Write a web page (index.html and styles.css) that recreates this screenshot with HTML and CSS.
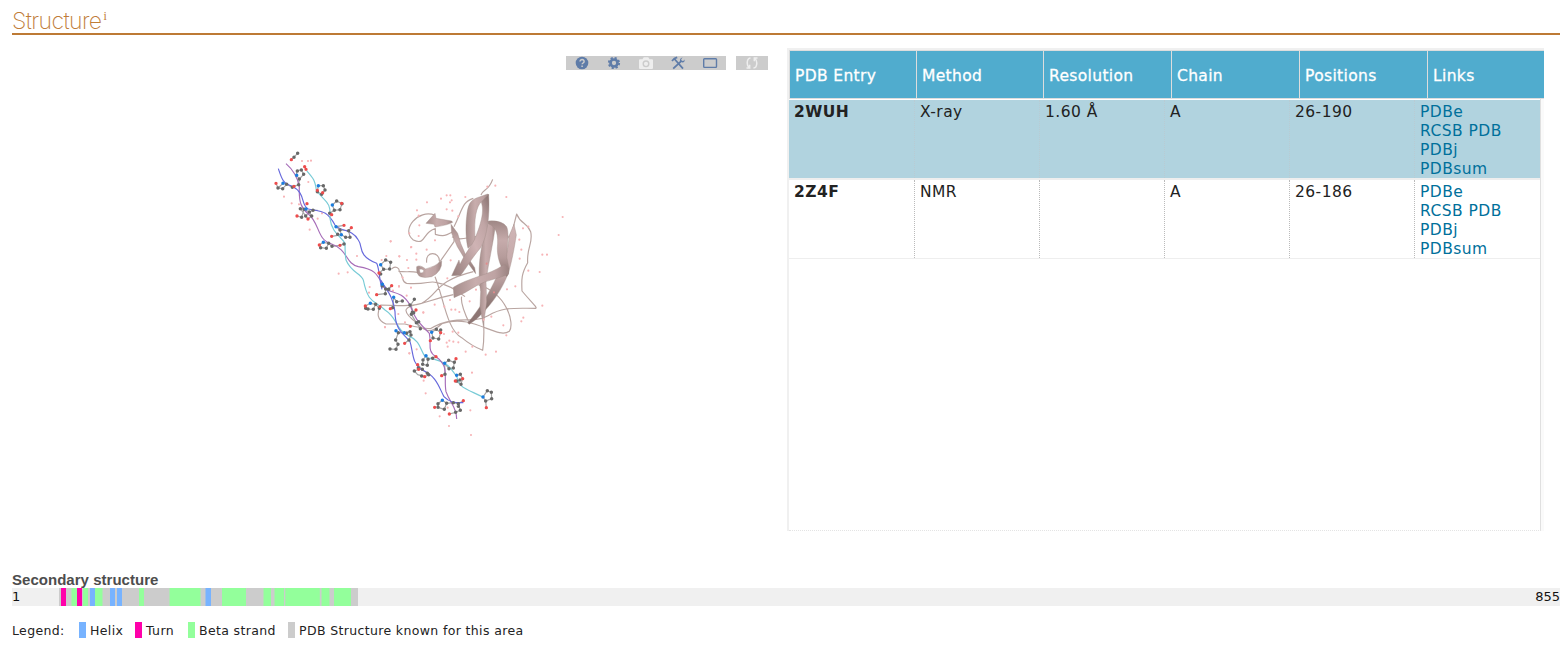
FILE: index.html
```html
<!DOCTYPE html>
<html lang="en">
<head>
<meta charset="utf-8">
<title>Structure</title>
<link rel="stylesheet" href="styles.css">
</head>
<body>
<main class="page">
<h2 class="title"><span>Structure</span><sup>i</sup></h2>
<div class="columns">
<section class="viewer">
<div class="toolbar">
<div class="tools">
<svg class="tool" viewBox="0 0 32 14"><circle cx="16" cy="7" r="6.3" fill="currentColor"/><path d="M14 5.5C14 2.9 18.3 3 18.1 5.6C18 7 16.1 7 16.1 8.3M16.1 9.6V11" fill="none" stroke="#ccc" stroke-width="1.5"/></svg>
<svg class="tool" viewBox="0 0 32 14"><circle cx="16" cy="7" r="3.5" fill="none" stroke="currentColor" stroke-width="2.7"/><circle cx="16" cy="7" r="5.2" fill="none" stroke="currentColor" stroke-width="1.8" stroke-dasharray="2.2 1.884"/></svg>
<svg class="tool off" viewBox="0 0 32 14"><path fill-rule="evenodd" fill="currentColor" d="M10 3.2H12.5L13.7 1.3H18.3L19.5 3.2H22Q23 3.2 23 4.2V12Q23 13 22 13H10Q9 13 9 12V4.2Q9 3.2 10 3.2ZM16 4.3A3.5 3.5 0 1 0 16 11.3A3.5 3.5 0 1 0 16 4.3M16 5.7A2.1 2.1 0 1 1 16 9.9A2.1 2.1 0 1 1 16 5.7"/></svg>
<svg class="tool" viewBox="0 0 32 14"><path d="M10 5L12.4 2.4L15.2 1.3M12.5 3L21 12.6M11.2 12.7L19.5 4.8" fill="none" stroke="currentColor" stroke-width="1.8"/><path d="M20.6 1.5L19.1 3.3L19.7 4.8L21.3 4.9L22.5 3.4Q23 6.3 20.5 6.5L18 5.5Q17.5 2 20.6 1.5" fill="currentColor"/></svg>
<svg class="tool" viewBox="0 0 32 14"><rect x="9.7" y="2.7" width="12.8" height="8.7" rx=".8" fill="none" stroke="currentColor" stroke-width="1.4"/></svg>
</div>
<div class="tools">
<svg class="tool off" viewBox="0 0 32 14"><path d="M14.5 1.9Q11.2 2.2 11.2 7Q11.2 9.7 13 11.5M17.5 12.1Q20.8 11.8 20.8 7Q20.8 4.3 19 2.5M13.7 8.8V12.1H10.5M18.3 5.2V1.9H21.5" fill="none" stroke="currentColor" stroke-width="1.5"/></svg>
</div>
</div>
<svg class="molecule" viewBox="265 145 310 300">
<defs>
<linearGradient id="ribbon" x1="0" y1="0" x2="1" y2="0"><stop offset="0" stop-color="#a58d8b"/><stop offset=".4" stop-color="#c8adad"/><stop offset=".75" stop-color="#bea3a3"/><stop offset="1" stop-color="#9c8482"/></linearGradient>
<linearGradient id="arrow" x1="0" y1="1" x2="1" y2="0"><stop offset="0" stop-color="#947c7a"/><stop offset=".5" stop-color="#cfb3b4"/><stop offset=".75" stop-color="#c0a5a5"/><stop offset="1" stop-color="#87706e"/></linearGradient>
<linearGradient id="strand" x1="0" y1="0" x2="0" y2="1"><stop offset="0" stop-color="#9f8785"/><stop offset=".35" stop-color="#c6abab"/><stop offset=".65" stop-color="#b69c9b"/><stop offset="1" stop-color="#8c7472"/></linearGradient>
<linearGradient id="tail" x1="0" y1="0" x2="0" y2="1"><stop offset="0" stop-color="#d0b5b6"/><stop offset=".5" stop-color="#c2a7a7"/><stop offset=".8" stop-color="#8e7775"/><stop offset="1" stop-color="#8c7472"/></linearGradient>
</defs>
<g transform="translate(380 170) scale(.33333)">
<path class="coil" d="M338 28C325 65 310 55 303 75M222 170C246 125 245 95 280 85M222 187V215L182 272L149 319M165 136C115 115 60 180 100 210C140 228 125 187 166 176V193C200 203 205 190 220 185M140 278C135 240 180 245 178 274M35 297C45 285 60 295 57 304C80 307 90 303 113 307M57 303C75 325 62 335 80 340C140 345 150 330 170 338C210 345 240 368 255 380M165 320C190 380 200 480 245 503Q275 528 308 541Q317 480 304 388M220 374C120 395 140 407 55 407L2 405C-10 430-10 450 18 462H75C115 475 118 473 151 476C230 430 275 465 324 437C370 410 400 415 467 415C474 413 454 397 426 363C424 325 425 310 443 278C440 230 460 220 452 185C440 155 423 165 410 132L399 175M296 345C380 370 405 460 388 484C350 510 280 430 188 460C175 468 150 505 112 460C60 420 70 410 125 400C180 370 160 335 280 305M245 380Q240 400 268 460M216 200C240 215 266 200 292 200"/>
</g>
<g class="ribbons" transform="translate(440 185) scale(.33333)">
<path fill="url(#strand)" d="M33 118L53 145L62 175L75 205L104 248L107 266L70 215L52 185L35 145Z"/>
<path fill="url(#tail)" d="M222 118L229 150C222 195 214 235 205 265C190 300 170 345 110 402L88 418L83 414C120 370 150 320 170 275C190 245 205 200 207 152L204 160Z"/>
<path fill="url(#ribbon)" d="M145 110L167 112C162 170 145 230 138 290L140 350L130 422L120 365L122 320C112 260 118 190 145 110Z"/>
<path fill="url(#ribbon)" d="M143 27L118 36C88 45 84 60 80 95C76 130 78 165 84 190L106 170C102 120 104 80 119 56L146 30Z"/>
<path fill="url(#arrow)" d="M146 28C150 90 142 155 122 188C95 220 85 240 62 271L35 272L57 225L60 238C75 205 90 190 103 165C122 120 134 80 124 52Q127 47 146 28Z"/>
<path fill="url(#strand)" d="M145 108Q185 105 200 125C208 145 202 180 200 215L207 250Q208 268 200 275C185 250 172 225 172 190C175 150 172 128 145 116Z"/>
<path fill="url(#ribbon)" d="M40 307C80 280 150 270 190 240Q195 236 200 242Q208 255 205 268C170 283 140 285 110 302Q75 325 42 338Z"/>
</g>
<g class="ribbons" transform="translate(405 205) scale(.33333)">
<path fill="url(#ribbon)" d="M63 55L90 25L93 40L140 48L143 52Q130 60 90 66L87 58Z"/>
<path fill="url(#ribbon)" fill-rule="evenodd" d="M35 185Q45 178 62 192Q90 185 110 168Q112 200 80 215Q35 225 35 195ZM43 193Q52 190 57 197Q54 207 45 203Z"/>
</g>
<g transform="translate(380 170) scale(.33333)">
<path class="water" d="M322 50h0M346 47h0M200 76h0M211 76h0M183 86h0M215 91h0M210 97h0M141 97h0M256 81h0M379 81h0M111 121h0M200 118h0M217 122h0M116 137h0M235 139h0M548 141h0M118 166h0M88 190h0M116 198h0M536 195h0M429 175h0M445 170h0M32 214h0M94 231h0M165 211h0M418 209h0M424 239h0M140 239h0M487 254h0M501 254h0M58 259h0M109 251h0M81 270h0M109 269h0M212 271h0M419 266h0M445 302h0M479 306h0M202 325h0M57 348h0M39 362h0M93 353h0M406 349h0M381 358h0M288 359h0M102 390h0M130 427h0M164 404h0M193 410h0M210 390h0M214 419h0M226 419h0M238 426h0M487 407h0M269 394h0M430 443h0M424 454h0M311 449h0M370 466h0M379 496h0M218 485h0M235 488h0M208 512h0M220 515h0M235 517h0M200 518h0M203 530h0M277 530h0M257 545h0M348 545h0M317 554h0M192 492h0M75 457h0M15 471h0M88 550h0M110 538h0M68 323h0M4 335h0M334 440h0"/>
<path class="water near" d="M320 281h0M342 367h0"/>
</g>
<g transform="translate(260 140) scale(.33333)">
<path class="water" d="M126 63h0M144 63h0M153 62h0M145 126h0M72 170h0M95 190h0M117 193h0M186 220h0M173 236h0M149 269h0M291 348h0M236 401h0M263 397h0M329 441h0M392 304h0M379 348h0M365 360h0M418 349h0M453 322h0M445 384h0M417 440h0"/>
<path class="bond" d="M94 59L113 40M134 80L138 88M110 106L110 92L124 90L131 103L118 117L110 106M118 117L116 134L102 139M48 130L54 144L68 146L80 133L69 130L54 144M80 133L97 142M111 228L125 232L132 208L148 216L159 211L173 211M137 228L148 216L155 228L144 237L121 206M175 137L190 137L195 150L185 163L172 155ZM217 195L230 183L246 191L240 209L223 211ZM223 211L209 220M228 260L252 256M240 270L266 272L274 263M228 260L240 270L244 284L257 292L270 292L266 272M244 284L233 286L215 289M240 316L252 312M190 307L178 315L182 323L199 325L206 310ZM206 310L216 319L240 316M362 374L377 360L392 367L389 387L371 388ZM371 388L357 399M368 435L382 448L395 438"/>
<path class="purple" d="M78 71C100 90 112 108 118 140C116 190 125 205 145 222C180 250 170 300 215 312C265 330 255 370 295 380C345 388 350 400 372 440"/>
<path class="blue" d="M55 86C65 115 68 130 95 138C140 160 120 195 145 207C185 215 200 210 225 255C240 275 275 265 295 300C310 320 290 345 350 370C358 385 358 420 366 448"/>
<path class="cyan" d="M140 92C160 115 165 120 169 150C190 185 215 180 210 235C215 280 245 290 255 310C255 330 255 345 258 360C275 400 302 398 310 420"/>
<path class="carbon" d="M113 40h0M102 52h0M112 93h0M124 90h0M131 103h0M118 117h0M116 134h0M54 144h0M68 146h0M80 133h0M97 142h0M132 208h0M121 206h0M148 216h0M155 228h0M159 211h0M125 232h0M137 228h0M190 137h0M195 150h0M172 155h0M185 163h0M230 183h0M246 191h0M240 209h0M223 211h0M209 220h0M240 270h0M266 272h0M270 292h0M257 292h0M233 283h0M252 312h0M206 310h0M216 319h0M199 325h0M182 323h0M377 360h0M392 367h0M389 387h0M371 388h0M362 402h0"/>
<path class="oxygen" d="M94 59h0M134 80h0M138 88h0M48 130h0M102 139h0M141 191h0M111 228h0M144 237h0M172 151h0M188 158h0M245 190h0M215 224h0M252 256h0M274 263h0M215 289h0M240 316h0M178 315h0M357 399h0"/>
<path class="nitrogen" d="M110 106h0M69 130h0M138 207h0M175 137h0M217 195h0M228 260h0M244 284h0M190 307h0M362 374h0"/>
</g>
<g transform="translate(350 280) scale(.33333)">
<path class="water" d="M57 38h0M105 142h0M145 102h0M178 220h0M221 302h0M227 340h0M269 409h0M297 438h0M361 391h0M363 465h0M366 278h0M293 383h0M170 47h0M220 98h0"/>
<path class="bond" d="M97 13L107 27L116 28L125 17M107 27L106 41L80 44M121 86L128 83L131 52L140 65L157 63M182 75L193 58M182 75L191 98L198 90M61 70L46 78L52 87L70 88L77 73ZM77 73L88 85M184 103L199 128L211 146M245 157L259 148L272 158L266 177L249 174ZM138 152L145 158L137 180L144 193L138 208L120 207M145 158L163 158L180 155L183 165L177 180L164 190M228 227L219 240L218 253L232 256L234 238ZM234 238L258 230M284 250L296 241L313 247L310 264L297 266ZM313 247L318 236M284 250L285 283L275 287M320 286L331 283L338 296L333 313L316 303M203 254L206 268L193 273L203 284L224 290L236 284L217 268ZM277 361L264 371L264 382L283 388L290 370ZM290 370L310 368L325 371L331 391L317 397L298 402M325 371L340 362M399 351L412 332L424 337L425 356L407 363ZM407 363L409 383"/>
<path class="cyan" d="M40 0C55 75 75 60 105 90C145 115 135 150 180 170C220 185 210 235 240 235C290 245 300 260 320 290C332 325 335 320 400 352"/>
<path class="purple" d="M100 20C120 45 150 25 180 75C195 120 210 130 238 160C245 190 230 215 258 230C300 260 280 290 288 335C300 370 320 380 320 417"/>
<path class="blue" d="M92 0C110 30 130 50 135 95C135 150 160 160 180 185C190 215 185 250 215 270C260 285 270 330 282 350C300 370 320 368 340 368"/>
<path class="carbon" d="M97 18h0M107 27h0M116 28h0M106 41h0M128 83h0M140 65h0M157 63h0M193 58h0M191 98h0M180 75h0M47 85h0M54 87h0M70 88h0M77 73h0M88 85h0M184 103h0M187 97h0M199 128h0M206 125h0M211 146h0M259 148h0M272 150h0M249 174h0M266 177h0M145 158h0M137 180h0M144 193h0M138 208h0M120 207h0M170 160h0M180 155h0M177 180h0M183 165h0M219 240h0M234 238h0M232 256h0M218 253h0M248 235h0M296 241h0M313 247h0M310 264h0M297 266h0M285 283h0M320 303h0M331 283h0M330 300h0M333 313h0M193 273h0M205 264h0M217 268h0M232 280h0M215 288h0M236 284h0M264 371h0M264 382h0M283 388h0M290 370h0M310 368h0M325 371h0M325 379h0M317 397h0M331 391h0M412 332h0M424 337h0M425 356h0M407 363h0"/>
<path class="oxygen" d="M125 17h0M80 44h0M121 86h0M198 90h0M46 78h0M90 80h0M181 139h0M241 182h0M272 158h0M164 190h0M258 230h0M318 236h0M275 287h0M338 296h0M316 303h0M203 254h0M206 268h0M224 290h0M254 382h0M340 362h0M298 402h0M409 383h0"/>
<path class="nitrogen" d="M97 13h0M131 52h0M61 70h0M138 152h0M163 158h0M245 157h0M228 227h0M284 250h0M320 286h0M277 361h0M399 351h0"/>
</g>
</svg>
</section>
<section class="entries">
<div class="head"><span>PDB Entry</span><span>Method</span><span>Resolution</span><span>Chain</span><span>Positions</span><span>Links</span></div>
<div class="body">
<div class="row selected"><div><b>2WUH</b></div><div>X-ray</div><div>1.60 Å</div><div>A</div><div>26-190</div><div class="links"><a>PDBe</a><a>RCSB PDB</a><a>PDBj</a><a>PDBsum</a></div></div>
<div class="row"><div><b>2Z4F</b></div><div>NMR</div><div></div><div>A</div><div>26-186</div><div class="links"><a>PDBe</a><a>RCSB PDB</a><a>PDBj</a><a>PDBsum</a></div></div>
</div>
</section>
</div>
<h4 class="subtitle">Secondary structure</h4>
<div class="sequence">
<span>1</span>
<svg class="track" viewBox="0 0 330 18">
<path fill="#ccc" d="M17 0h299v18h-299z"/>
<path fill="#f0a" d="M19 0h5v18h-5zM35 0h5v18h-5z"/>
<path fill="#93ff9b" d="M29.5 0h5.5v18h-5.5zM41 0h5v18h-5zM53 0h7.5v18h-7.5zM97 0h5v18h-5zM127.5 0h31v18h-31zM180 0h24v18h-24zM221.5 0h7.5v18h-7.5zM232.5 0h9.5v18h-9.5zM243.3 0h34.5v18h-34.5zM279.5 0h8v18h-8zM292 0h17v18h-17z"/>
<path fill="#77b3ff" d="M48 0h5v18h-5zM68 0h5v18h-5zM75 0h5v18h-5zM163.5 0h5.5v18h-5.5z"/>
</svg>
<span class="end">855</span>
</div>
<div class="legend"><span class="label">Legend:</span><i class="key helix"></i><span class="helix-label">Helix</span><i class="key turn"></i><span class="turn-label">Turn</span><i class="key strand"></i><span class="strand-label">Beta strand</span><i class="key known"></i><span>PDB Structure known for this area</span></div>
</main>
</body>
</html>
```
FILE: styles.css
```css
* { box-sizing: border-box; }
body { margin: 0; background: #fff; color: #222; font-family: "DejaVu Sans", Verdana, sans-serif; }
.page { width: 1564px; height: 646px; padding: 0 4px 0 12px; overflow: hidden; }
.title { display: flex; height: 35px; margin: 0; padding-top: 7px; border-bottom: 2px solid #bd7a35; color: #c07c37; font: 200 23px/28px Inter, sans-serif; letter-spacing: -.6px; }
.title sup { margin-left: 2px; font: 12px/18px "Liberation Serif", serif; letter-spacing: 0; }
.columns { display: flex; height: 536px; }
.viewer { width: 775px; padding-top: 21px; }
.toolbar { display: flex; justify-content: flex-end; gap: 10px; padding-right: 19px; height: 14px; }
.tools { display: flex; background: #ccc; color: #5f7ca8; }
.tool { width: 32px; height: 14px; }
.off { color: #eee; }
.molecule { display: block; width: 310px; height: 300px; margin: 75px 0 0 253px; }
.molecule path { stroke-linejoin: round; }
.water, .carbon, .oxygen, .nitrogen { fill: none; stroke-linecap: round; }
.water { stroke: #f7b4b7; stroke-width: 6.5; }
.near { stroke: #e08c8c; }
.coil { fill: none; stroke: #b9a5a1; stroke-width: 3.5; }
.ribbons path { stroke: #a08a87; stroke-width: 1.2; }
.bond { fill: none; stroke: #a4a4a4; stroke-width: 3.5; }
.carbon { stroke: #686868; stroke-width: 10.5; }
.oxygen { stroke: #ed4c4c; stroke-width: 10; }
.nitrogen { stroke: #1c7ddd; stroke-width: 10.5; }
.purple, .blue, .cyan { fill: none; stroke-width: 3.5; }
.purple { stroke: #a66cb8; }
.blue { stroke: #6668dc; }
.cyan { stroke: #78cbd6; }
.entries { width: 757px; height: 483px; margin-top: 13px; padding-top: 2px; border-left: 2px solid #f0f0f0; background: linear-gradient(#f0f0f0 2px, transparent 2px); }
.head { display: grid; grid-template-columns: 127px 127px 128px 128px 128px 117px; grid-template-rows: 47px; height: 49px; border: solid #ddd; border-width: 1px 0; color: #fff; font-size: 15.5px; line-height: 49px; letter-spacing: .35px; -webkit-text-stroke: .3px #fff; }
.head span { padding: 1px 0 0 5px; border-left: 1px solid #ddd; background: #50acce; }
.body { width: 752px; height: 432px; padding-top: 1px; border-right: 1px solid #e0e0e0; border-bottom: 1px dotted #e4e4e4; background: #fff; box-shadow: 3px 0 #fafafa; }
.row { display: grid; grid-template-columns: 126px repeat(5, 125px); grid-template-rows: 78px; height: 79px; border-bottom: 1px solid #eee; font-size: 15.5px; line-height: 19px; letter-spacing: .45px; }
.row > div { padding: 3px 5px 0; border-right: 1px dotted #bbb; }
.row > div:last-child { border-right: 0; }
.row.selected { height: 80px; border-bottom-width: 2px; background: #b1d3df; }
.row.selected > div { border-right-color: #b9cbd3; }
.links { display: flex; flex-direction: column; }
.links a { color: #00709b; }
.subtitle { height: 17px; margin: 0; color: #4d4d4d; font: bold 15px/18px "Liberation Sans", sans-serif; letter-spacing: .03px; }
.sequence { display: flex; height: 18px; background: #f0f0f0; color: #111; font-size: 13px; line-height: 18px; }
.sequence span { width: 30px; }
.sequence .end { width: auto; margin-left: auto; }
.track { width: 330px; height: 18px; }
.legend { display: flex; align-items: center; height: 16px; margin-top: 16px; font-size: 12.5px; line-height: 17px; letter-spacing: .36px; white-space: nowrap; }
.label { width: 67px; }
.key { width: 7px; height: 16px; margin-right: 4px; }
.helix { background: #77b3ff; }
.turn { background: #f0a; }
.strand { background: #93ff9b; }
.known { background: #ccc; }
.helix-label { width: 45px; }
.turn-label { width: 42px; }
.strand-label { width: 89px; }
```
